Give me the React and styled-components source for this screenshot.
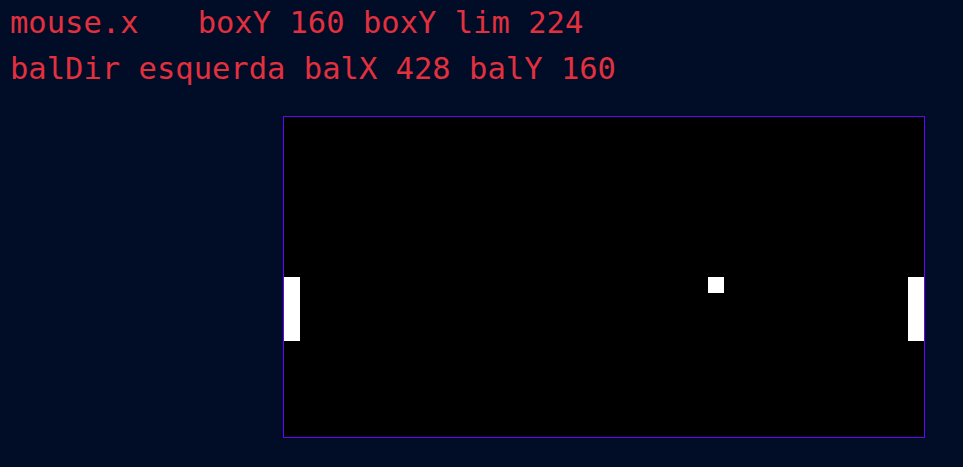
import React from 'react';
import styled, { createGlobalStyle } from 'styled-components';

const GlobalStyle = createGlobalStyle`
  html, body {
    margin: 0;
    padding: 0;
    background: #010c26;
    height: 100%;
  }
  #root {
    min-height: 100%;
  }
`;

const Page = styled.div`
  min-height: 467px;
  background: #010c26;
  padding: 0 10px;
  box-sizing: border-box;
`;

const Stats = styled.div`
  display: flex;
  flex-direction: column;
`;

const Line = styled.div`
  font-family: 'DejaVu Sans Mono', 'Liberation Mono', monospace;
  font-size: 30.5px;
  line-height: 46px;
  color: #e2303f;
  white-space: pre;
`;

const Value = styled.span`
  margin-left: ${(p) => p.gap || 0}px;
`;

const Board = styled.div`
  position: relative;
  width: 640px;
  height: 320px;
  margin: 24px 0 0 273px;
  background: #000;
  border: 1px solid #6600ff;
`;

const Paddle = styled.div`
  position: absolute;
  top: ${(p) => p.y}px;
  ${(p) => (p.side === 'left' ? 'left: 0;' : 'right: 0;')}
  width: 16px;
  height: 64px;
  background: #fff;
`;

const Ball = styled.div`
  position: absolute;
  left: ${(p) => p.x}px;
  top: ${(p) => p.y}px;
  width: 16px;
  height: 16px;
  background: #fff;
`;

const App = () => {
  const boxY = 160;
  const lim = boxY + 64;
  const balX = 428;
  const balY = 160;

  return (
    <Page>
      <GlobalStyle />
      <Stats>
        <Line>
          {'mouse.x   '}
          <Value gap={4}>{`boxY ${boxY} boxY lim ${lim}`}</Value>
        </Line>
        <Line>{`balDir esquerda balX ${balX} balY ${balY}`}</Line>
      </Stats>
      <Board>
        <Paddle side='left' y={boxY} />
        <Ball x={balX - 4} y={balY} />
        <Paddle side='right' y={boxY} />
      </Board>
    </Page>
  );
};

export default App;
